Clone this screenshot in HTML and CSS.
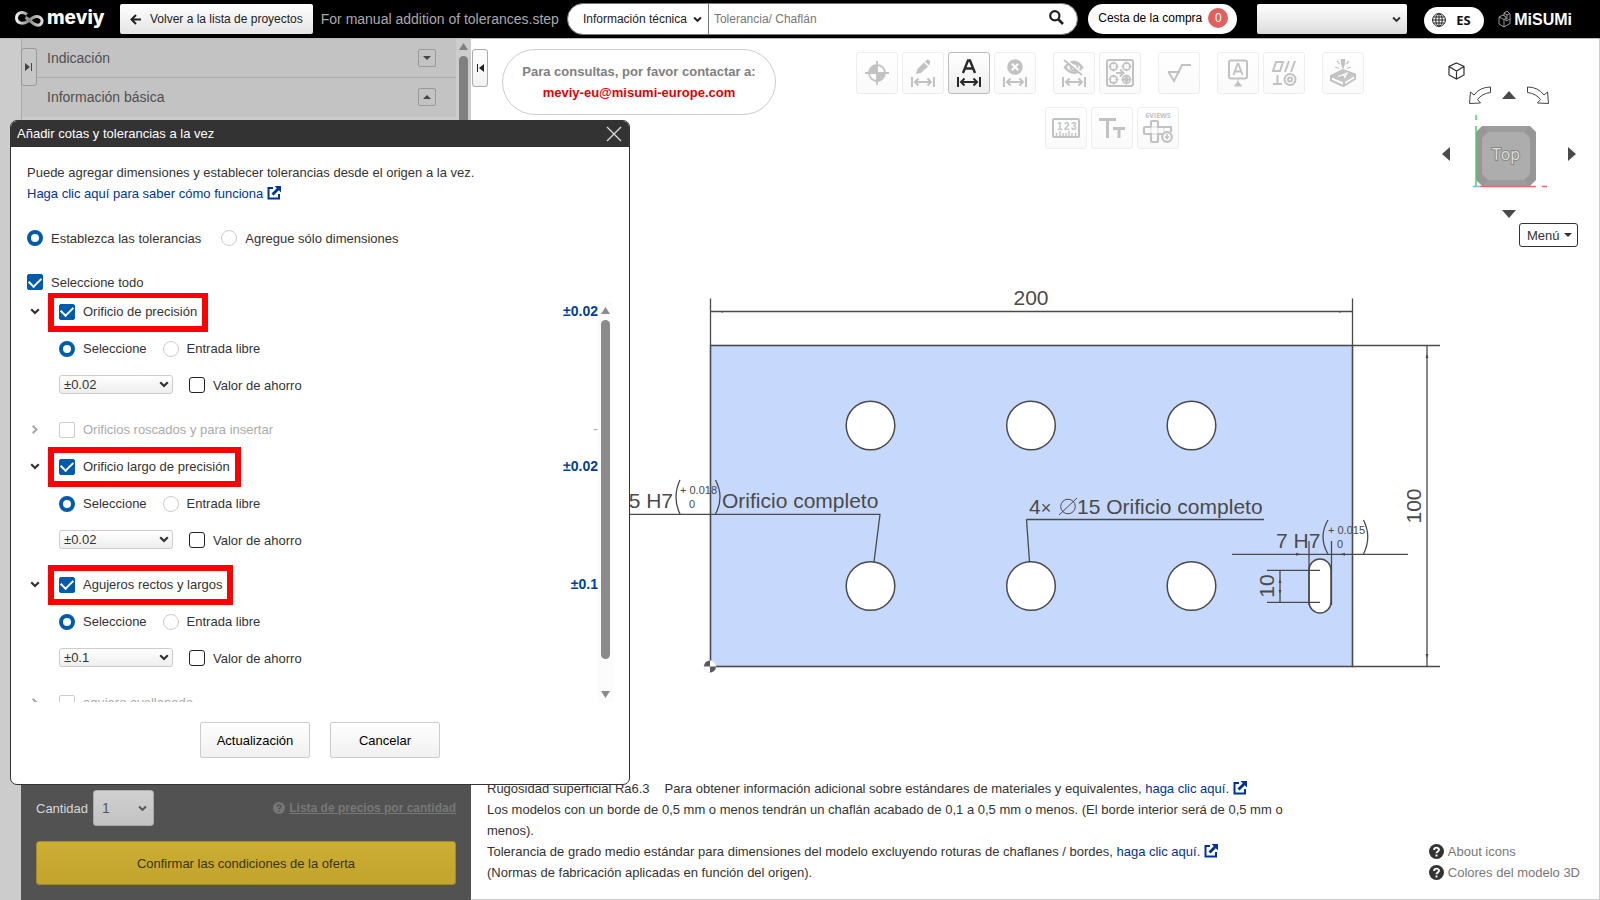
FILE: index.html
```html
<!DOCTYPE html>
<html lang="es">
<head>
<meta charset="utf-8">
<meta name="viewport" content="width=device-width, initial-scale=1">
<title>meviy</title>
<link rel="stylesheet" href="styles.css">
</head>
<body>
<svg class="defs" aria-hidden="true">
  <symbol id="chev" viewBox="0 0 10 7"><path d="M1.200 1.200l3.800 3.800 3.800-3.800" fill="none" stroke="currentColor" stroke-width="2.200"/></symbol>
  <symbol id="ext" viewBox="0 0 14 14"><path d="M6 2H1.500v10.500H12V8" fill="none" stroke="currentColor" stroke-width="2"/><path d="M7.500 0H14v6.500l-2.200-2.200L6.500 9.600 4.500 7.500 9.800 2.300z" fill="currentColor"/></symbol>
  <symbol id="help" viewBox="0 0 14 14"><circle cx="7" cy="7" r="7" fill="currentColor"/><path d="M4.800 5.500C4.800 2.700 9.300 2.800 9.300 5.300 9.300 7 7 6.900 7 8.600M7 9.800v1.800" fill="none" stroke="var(--mark)" stroke-width="1.800"/></symbol>
  <symbol id="dim" viewBox="0 0 24 10"><path d="M1 0v10M23 0v10M4 5h16M7.500 1.500L4 5l3.500 3.500M16.500 1.500L20 5l-3.500 3.500" fill="none" stroke="currentColor" stroke-width="2"/></symbol>
</svg>

<header class="topbar">
  <div class="brand">
    <svg width="29" height="17" viewBox="0 0 29 17" aria-hidden="true"><defs><linearGradient id="silver"><stop offset="0" stop-color="#eee"/><stop offset="0.500" stop-color="#888"/><stop offset="1" stop-color="#ddd"/></linearGradient></defs><path d="M12 3.500C7-0.500 1.500 2 1.500 7s6 7 11 3.500C16 7.500 19 5 22.500 5.500S28 9 26.500 12s-5 2.500-8 .5-5-5-8-6" fill="none" stroke="url(#silver)" stroke-width="3"/></svg>
    <span class="brand-name">meviy</span>
  </div>
  <button class="back" type="button"><svg width="11" height="11" viewBox="0 0 11 11" aria-hidden="true"><path d="M6 1L1.500 5.500 6 10M1.500 5.500H11" fill="none" stroke="#222" stroke-width="2"/></svg>Volver a la lista de proyectos</button>
  <span class="filename">For manual addition of tolerances.step</span>
  <form class="search">
    <span class="pick pick-search"><select aria-label="Categoría"><option>Información técnica</option></select><svg class="chev"><use href="#chev"/></svg></span>
    <input type="text" aria-label="Buscar" placeholder="Tolerancia/ Chaflán">
    <button class="search-go" type="button" aria-label="Buscar"><svg width="15" height="15" viewBox="0 0 15 15"><circle cx="5.800" cy="5.800" r="4.600" fill="none" stroke="#222" stroke-width="2.200"/><path d="M9 9l5 5" stroke="#222" stroke-width="2.600"/></svg></button>
  </form>
  <button class="cart" type="button">Cesta de la compra <span class="badge">0</span></button>
  <span class="pick pick-user"><select aria-label="Usuario"><option></option></select><svg class="chev"><use href="#chev"/></svg></span>
  <button class="lang" type="button"><svg width="14" height="14" viewBox="0 0 14 14" fill="none" stroke="#222" aria-hidden="true"><circle cx="7" cy="7" r="6.400"/><ellipse cx="7" cy="7" rx="3.200" ry="6.400"/><path d="M7 .5v13M.5 7h13M1.500 4h11M1.500 10h11"/></svg>ES</button>
  <div class="misumi">
    <svg width="14" height="18" viewBox="0 0 14 18" fill="none" stroke="#aaa" stroke-width="0.900" aria-hidden="true"><path d="M1 7l4-2 3 2v4l4-2V4L9 1 6 3v3M1 7v7l5 3V9.500zM6 9.500l2-1M6 17l6-3.500V9M6 3l3 2v4M9 5l3-1.500"/></svg>
    <span>MiSUMi</span>
  </div>
</header>

<main class="work">
  <aside class="side">
    <button class="tab tab-left" type="button" aria-label="Expandir"><svg width="8" height="8" viewBox="0 0 8 8"><path d="M0 0l5 4-5 4zM6 0h1v8H6z" fill="#444"/></svg></button>
    <div class="side-scroll">
      <div class="side-list">
        <div class="side-row"><span>Indicación</span><button class="fold" type="button" aria-label="Abrir Indicación"><svg width="8" height="4" viewBox="0 0 8 4"><path d="M0 0h8L4 4z" fill="#444"/></svg></button></div>
        <div class="side-row"><span>Información básica</span><button class="fold" type="button" aria-label="Cerrar Información básica"><svg width="8" height="4" viewBox="0 0 8 4"><path d="M0 4h8L4 0z" fill="#444"/></svg></button></div>
      </div>
      <div class="side-bar" aria-hidden="true"><svg width="9" height="7" viewBox="0 0 9 7"><path d="M0 7h9L4.500 0z" fill="#808080"/></svg><i></i></div>
    </div>
    <div class="order">
      <div class="order-row">
        <label for="qty">Cantidad</label>
        <span class="pick pick-qty"><select id="qty"><option>1</option></select><svg class="chev"><use href="#chev"/></svg></span>
        <a class="prices" href="#"><svg width="12" height="12"><use href="#help"/></svg><span>Lista de precios por cantidad</span></a>
      </div>
      <button class="confirm" type="button">Confirmar las condiciones de la oferta</button>
    </div>
  </aside>

  <section class="viewer">
    <svg class="drawing" viewBox="471 39 1128 860" preserveAspectRatio="xMidYMid meet" role="img" aria-label="Plano de la pieza">
      <rect x="710" y="345" width="642" height="321" fill="#c6d9fd"/>
      <g fill="#fff" stroke="#4a4a4a" stroke-width="1.500">
        <circle cx="870.500" cy="425.500" r="24.300"/><circle cx="1031" cy="425.500" r="24.300"/><circle cx="1191.500" cy="425.500" r="24.300"/>
        <circle cx="870.500" cy="586" r="24.300"/><circle cx="1031" cy="586" r="24.300"/><circle cx="1191.500" cy="586" r="24.300"/>
        <rect x="1309" y="559" width="22" height="54" rx="11"/>
      </g>
      <g fill="none" stroke="#4a4a4a" stroke-width="1.300">
        <rect x="710.500" y="345.500" width="642" height="321" stroke-width="1.600"/>
        <path d="M710.500 298.500V345M1352.500 298.500V345M710.500 311.500H1352"/>
        <path d="M1352 345.500H1440M1352 666.500H1440M1427 345V666" />
        <path d="M1026.500 519.500H1264M1026.500 519.500L1029.500 562"/>
        <path d="M600 514.300H880L874 562"/>
        <path d="M1232 554.300H1408M1309 541V605M1331.500 541V605M1267 570.300H1320M1267 602.300H1320M1280 570V602"/>
        <path d="M680 480Q672 497 680 514M715.500 480Q724.500 497 715.500 514M1328 520Q1318 537 1328 554M1363.500 520Q1372 537 1363.500 554"/>
      </g>
      <path d="M719 311.500h4v1.300zM1343 311.500h-4v1.300zM1425.500 358l1.500-4 1.500 4zM1425.500 654l1.500 4 1.500-4zM1301 554.300l-5-1.500v3zM1340 554.300l5-1.500v3zM1278.500 583l1.500-4 1.500 4zM1278.500 590l1.500 4 1.500-4z" fill="#4a4a4a"/>
      <circle cx="710" cy="666.500" r="6" fill="#fff" stroke="#ccc" stroke-width="0.500"/><path d="M710 666.500V660.500A6 6 0 0 0 704 666.500zM710 666.500V672.500A6 6 0 0 0 716 666.500z" fill="#5a5a5a"/>
      <g class="dims">
        <text x="1031" y="305" text-anchor="middle">200</text>
        <text x="1421" y="506" text-anchor="middle" transform="rotate(-90 1421 506)">100</text>
        <text x="1274" y="586" text-anchor="middle" transform="rotate(-90 1274 586)">10</text>
        <text x="673" y="508" text-anchor="end">15 H7</text>
        <text x="722" y="508">Orificio completo</text>
        <text x="1029" y="514">4<tspan class="times">×</tspan></text>
        <text x="1077" y="514">15 Orificio completo</text>
        <text x="1276" y="548">7 H7</text>
        <g class="tol"><text x="680" y="494">+ 0.018</text><text x="689" y="508">0</text><text x="1328" y="534">+ 0.015</text><text x="1337" y="548">0</text></g>
      </g>
      <path d="M1059 515L1077 498" stroke="#4a4a4a" fill="none"/><circle cx="1068" cy="506.500" r="7.300" stroke="#4a4a4a" fill="none"/>
    </svg>

    <div class="viewer-top">
      <button class="tab tab-right" type="button" aria-label="Contraer"><svg width="8" height="8" viewBox="0 0 8 8"><path d="M8 0L3 4l5 4zM1 0h1v8H1z" fill="#222"/></svg></button>
      <p class="contact">Para consultas, por favor contactar a:<br><a href="mailto:meviy-eu@misumi-europe.com">meviy-eu@misumi-europe.com</a></p>

      <div class="tools">
        <div class="tools-row">
          <div class="group">
            <button class="tool" type="button" aria-label="Origen"><svg width="24" height="24" viewBox="0 0 24 24"><circle cx="12" cy="12" r="8" fill="none" stroke="currentColor" stroke-width="1.800"/><path d="M12 12V4a8 8 0 0 0-8 8zM12 12v8a8 8 0 0 0 8-8z" fill="currentColor"/><path d="M12 0v24M0 12h24" stroke="currentColor" stroke-width="1.800"/></svg></button>
            <button class="tool" type="button" aria-label="Editar cota"><svg width="24" height="28" viewBox="0 0 24 28"><path d="M5 15l1.500-5L13 3.500l4 4L10 14zM14 2.500l1.500-1.500q1.500-1 3 .5t.5 3L17.800 6.200z" fill="currentColor"/><use href="#dim" y="18" width="24" height="10"/></svg></button>
            <button class="tool tool-on" type="button" aria-label="Cotas automáticas"><svg width="24" height="28" viewBox="0 0 24 28"><path d="M6 14L11 1.500h2L18 14M8 9.500h8" fill="none" stroke="currentColor" stroke-width="2.400"/><use href="#dim" y="18" width="24" height="10"/></svg></button>
            <button class="tool" type="button" aria-label="Borrar cota"><svg width="24" height="28" viewBox="0 0 24 28"><circle cx="12" cy="8" r="7.800" fill="currentColor"/><path d="M8.800 4.800l6.400 6.400M15.200 4.800l-6.400 6.400" stroke="#fff" stroke-width="2"/><use href="#dim" y="18" width="24" height="10"/></svg></button>
          </div>
          <div class="group">
            <button class="tool" type="button" aria-label="Ocultar cotas"><svg width="24" height="28" viewBox="0 0 24 28"><path d="M3 8.500Q12-3 20 8.500 12 19 3 8.500z" fill="none" stroke="currentColor" stroke-width="2.500"/><circle cx="12" cy="8" r="3.500" fill="none" stroke="currentColor" stroke-width="2"/><path d="M3 0l18 15" stroke="#fff" stroke-width="2"/><path d="M2 1l18 15" stroke="currentColor" stroke-width="1.800"/><use href="#dim" y="18" width="24" height="10"/></svg></button>
            <button class="tool" type="button" aria-label="Agrupar orificios"><svg width="28" height="28" viewBox="0 0 28 28" fill="none" stroke="currentColor"><rect x="1" y="1" width="26" height="26" rx="2" stroke-width="2"/><g stroke-width="1.800"><circle cx="7.500" cy="7.500" r="3.600"/><circle cx="20.500" cy="7.500" r="3.600"/><circle cx="7.500" cy="20.500" r="3.600"/><circle cx="20.500" cy="20.500" r="3.800"/></g><path d="M7.500 2.500v3M7.500 9.500v3M2.500 7.500h3M9.500 7.500h3M20.500 2.500v3M20.500 9.500v3M15.500 7.500h3M22.500 7.500h3M7.500 15.500v3M7.500 22.500v3M2.500 20.500h3M9.500 20.500h3M20.500 15.500v10M15.500 20.500h10"/><circle cx="20.500" cy="20.500" r="2" fill="currentColor"/><path d="M10 14h7M14 10.500l3.500 3.500-3.500 3.500" stroke-width="2"/></svg></button>
          </div>
          <div class="group">
            <button class="tool" type="button" aria-label="Rugosidad"><svg width="26" height="20" viewBox="0 0 26 20"><path d="M2 9h12M2.500 9l5.500 9L16 2h9" fill="none" stroke="currentColor" stroke-width="2"/></svg></button>
          </div>
          <div class="group">
            <button class="tool" type="button" aria-label="Referencia"><svg width="20" height="28" viewBox="0 0 20 28"><rect x="1" y="1.500" width="18" height="18" rx="2" fill="none" stroke="currentColor" stroke-width="2"/><path d="M5.500 16l4-11h1l4 11M7 12.500h6" fill="none" stroke="currentColor" stroke-width="1.800"/><path d="M10 19v4M6.500 27L10 22.500 13.500 27z" stroke="currentColor" fill="currentColor"/></svg></button>
            <button class="tool" type="button" aria-label="Tolerancia geométrica"><svg width="26" height="26" viewBox="0 0 26 26" fill="none" stroke="currentColor" stroke-width="2"><path d="M2 11L5 2h7L9 11zM14 12l4-11M20 12l4-11M2 24h9M6.500 15v9"/><circle cx="19" cy="19.500" r="5.500"/><circle cx="19" cy="19.500" r="2"/></svg></button>
          </div>
          <div class="group">
            <button class="tool" type="button" aria-label="Grabado"><svg width="28" height="28" viewBox="0 0 28 28"><path d="M12.500 0h3v5L14 9l-1.500-4zM8 2l2.500 3M20 2l-2.500 3M6 8l4 1.500M22 8l-4 1.500" fill="currentColor" stroke="currentColor" stroke-width="1.200"/><path d="M2 17l12-6 12 4.500-11 7zM2 17v4.500l12.500 5.500L26 20v-4.500M15 22.500V27" fill="none" stroke="currentColor" stroke-width="2" stroke-linejoin="round"/><path d="M4 17l10-5 10 3.500-9 6z" fill="currentColor"/><path d="M9 17.500l9-3.500-2.500 5M14 15.500l2 2" stroke="#fff" fill="none" stroke-width="1.200"/></svg></button>
          </div>
        </div>
        <div class="tools-row group">
          <button class="tool" type="button" aria-label="Unidades"><svg width="28" height="20" viewBox="0 0 28 20"><rect x="1" y="1" width="26" height="18" rx="1.500" fill="none" stroke="currentColor" stroke-width="2"/><path d="M4.500 18v-3M8 18v-5M11 18v-3M14 18v-3M17 18v-5M20 18v-3M23.500 18v-3" stroke="currentColor" stroke-width="1.400"/><g class="ico-num"><text x="5" y="12">1</text><text x="12" y="12">2</text><text x="19" y="12">3</text></g></svg></button>
          <button class="tool" type="button" aria-label="Tamaño de texto"><svg width="26" height="22" viewBox="0 0 26 22"><path d="M0 2.500h17M8.500 2v19M14 11.500h12M20 11v10" fill="none" stroke="currentColor" stroke-width="3"/></svg></button>
          <button class="tool" type="button" aria-label="Seis vistas"><svg width="32" height="34" viewBox="0 0 32 34"><text x="16" y="7" text-anchor="middle" class="ico-views">6VIEWS</text><path d="M9 16v-5q0-1 1-1h5q1 0 1 1v5h13v5M9 16H3q-1 0-1 1v5q0 1 1 1h6v7q0 1 1 1h5q1 0 1-1v-7h4" fill="none" stroke="currentColor" stroke-width="2.200"/><path d="M9 16h7v7H9zM22 16v5" fill="none" stroke="currentColor" stroke-width="0.600"/><circle cx="25" cy="26" r="4.800" fill="#fff" stroke="currentColor" stroke-width="2.200"/><path d="M25 23v4M23 25.500l2 2 2-2" fill="none" stroke="currentColor" stroke-width="1.600"/></svg></button>
        </div>
      </div>

      <nav class="orient" aria-label="Orientación">
        <button class="bare home" type="button" aria-label="Isométrica"><svg width="17" height="18" viewBox="0 0 17 18" fill="none" stroke="#333" stroke-width="1.200"><path d="M8.500 1l7.500 3.500v8.500L8.500 17 1 13V4.500zM1 4.500L8.500 9 16 4.500M8.500 9v8"/></svg></button>
        <div class="turns">
          <button class="bare" type="button" aria-label="Girar a la izquierda"><svg width="22" height="18" viewBox="0 0 22 18"><path d="M21.500 1v5.500Q13 7.500 8.500 13.500L11.500 17 0.500 17.500 1.500 6 5 9Q11 1 21.500 1z" fill="#fff" stroke="#444"/></svg></button>
          <button class="bare" type="button" aria-label="Arriba"><svg width="14" height="8" viewBox="0 0 14 8"><path d="M0 8h14L7 0z" fill="#4a4a4a"/></svg></button>
          <button class="bare" type="button" aria-label="Girar a la derecha"><svg width="22" height="18" viewBox="0 0 22 18"><path d="M0.500 1v5.500Q9 7.500 13.500 13.500L10.500 17l11 .5L20.500 6 17 9Q11 1 .5 1z" fill="#fff" stroke="#444"/></svg></button>
        </div>
        <div class="faces">
          <button class="bare" type="button" aria-label="Izquierda"><svg width="8" height="14" viewBox="0 0 8 14"><path d="M8 0v14L0 7z" fill="#4a4a4a"/></svg></button>
          <svg width="84" height="76" viewBox="0 0 84 76" role="img" aria-label="Top"><path d="M9 18l6-6h48l6 6v48l-6 6H15l-6-6z" fill="#979797"/><path d="M15 12h48l-6 6H21zM15 72h48l-6-6H21z" fill="#9d9d9d"/><path d="M15 24l6-6h36l6 6v36l-6 6H21l-6-6z" fill="#adadad"/><path d="M9 1v5M9 12v60" stroke="#4ccf6c" stroke-width="1.500"/><path d="M13 72.500H69M75 72.500h5" stroke="#f26464" stroke-width="1.500"/><path d="M6 72.500h7" stroke="#7fb6ea" stroke-width="1.500"/><text x="39" y="46" text-anchor="middle" class="face-name">Top</text></svg>
          <button class="bare" type="button" aria-label="Derecha"><svg width="8" height="14" viewBox="0 0 8 14"><path d="M0 0v14l8-7z" fill="#4a4a4a"/></svg></button>
        </div>
        <button class="bare down" type="button" aria-label="Abajo"><svg width="14" height="8" viewBox="0 0 14 8"><path d="M0 0h14L7 8z" fill="#4a4a4a"/></svg></button>
        <button class="menu" type="button">Menú<svg width="8" height="4" viewBox="0 0 8 4" aria-hidden="true"><path d="M0 0h8L4 4z" fill="#333"/></svg></button>
      </nav>
    </div>

    <div class="viewer-foot">
      <div class="notes">
        <p><span class="rough">Rugosidad superficial Ra6.3</span>Para obtener información adicional sobre estándares de materiales y equivalentes, <a href="#">haga clic aquí. <svg class="ext"><use href="#ext"/></svg></a></p>
        <p>Los modelos con un borde de 0,5 mm o menos tendrán un chaflán acabado de 0,1 a 0,5 mm o menos. (El borde interior será de 0,5 mm o menos).</p>
        <p>Tolerancia de grado medio estándar para dimensiones del modelo excluyendo roturas de chaflanes / bordes, <a href="#">haga clic aquí. <svg class="ext"><use href="#ext"/></svg></a><br>(Normas de fabricación aplicadas en función del origen).</p>
      </div>
      <div class="helps">
        <a href="#"><svg width="15" height="15"><use href="#help"/></svg>About icons</a>
        <a href="#"><svg width="15" height="15"><use href="#help"/></svg>Colores del modelo 3D</a>
      </div>
    </div>
  </section>
</main>

<div class="modal" role="dialog" aria-labelledby="modal-title">
  <div class="modal-head">
    <h1 id="modal-title">Añadir cotas y tolerancias a la vez</h1>
    <button class="bare" type="button" aria-label="Cerrar"><svg width="16" height="16" viewBox="0 0 16 16"><path d="M1 1l14 14M15 1L1 15" stroke="#ddd" stroke-width="1.300"/></svg></button>
  </div>
  <form class="modal-body">
    <p class="intro">Puede agregar dimensiones y establecer tolerancias desde el origen a la vez.<br><a href="#">Haga clic aquí para saber cómo funciona <svg class="ext"><use href="#ext"/></svg></a></p>
    <div class="modes">
      <label class="opt"><input type="radio" name="mode" checked>Establezca las tolerancias</label>
      <label class="opt"><input type="radio" name="mode">Agregue sólo dimensiones</label>
    </div>
    <label class="opt all"><input type="checkbox" checked>Seleccione todo</label>
    <div class="list-wrap">
      <div class="list">
        <div class="feature">
          <svg class="chev"><use href="#chev"/></svg>
          <label class="opt marked"><input type="checkbox" checked>Orificio de precisión</label>
          <output>±0.02</output>
        </div>
        <div class="choice"><label class="opt"><input type="radio" name="m1" checked>Seleccione</label><label class="opt"><input type="radio" name="m1">Entrada libre</label></div>
        <div class="value"><span class="pick"><select aria-label="Tolerancia"><option>±0.02</option></select><svg class="chev"><use href="#chev"/></svg></span><label class="opt"><input class="dark" type="checkbox">Valor de ahorro</label></div>

        <div class="feature off">
          <svg class="chev side-chev"><use href="#chev"/></svg>
          <label class="opt"><input type="checkbox" disabled>Orificios roscados y para insertar</label>
          <output>-</output>
        </div>

        <div class="feature">
          <svg class="chev"><use href="#chev"/></svg>
          <label class="opt marked"><input type="checkbox" checked>Orificio largo de precisión</label>
          <output>±0.02</output>
        </div>
        <div class="choice"><label class="opt"><input type="radio" name="m2" checked>Seleccione</label><label class="opt"><input type="radio" name="m2">Entrada libre</label></div>
        <div class="value"><span class="pick"><select aria-label="Tolerancia"><option>±0.02</option></select><svg class="chev"><use href="#chev"/></svg></span><label class="opt"><input class="dark" type="checkbox">Valor de ahorro</label></div>

        <div class="feature">
          <svg class="chev"><use href="#chev"/></svg>
          <label class="opt marked"><input type="checkbox" checked>Agujeros rectos y largos</label>
          <output>±0.1</output>
        </div>
        <div class="choice"><label class="opt"><input type="radio" name="m3" checked>Seleccione</label><label class="opt"><input type="radio" name="m3">Entrada libre</label></div>
        <div class="value"><span class="pick"><select aria-label="Tolerancia"><option>±0.1</option></select><svg class="chev"><use href="#chev"/></svg></span><label class="opt"><input class="dark" type="checkbox">Valor de ahorro</label></div>

        <div class="feature off">
          <svg class="chev side-chev"><use href="#chev"/></svg>
          <label class="opt"><input type="checkbox" disabled>agujero avellanado</label>
        </div>
      </div>
      <div class="list-bar" aria-hidden="true"><svg width="9" height="7" viewBox="0 0 9 7"><path d="M0 7h9L4.500 0z" fill="#8b8b8b"/></svg><i></i><svg width="9" height="7" viewBox="0 0 9 7"><path d="M0 0h9L4.500 7z" fill="#8b8b8b"/></svg></div>
    </div>
    <div class="actions">
      <button type="button">Actualización</button>
      <button type="button">Cancelar</button>
    </div>
  </form>
</div>
</body>
</html>
```
FILE: styles.css
```css
* { box-sizing: border-box; }
body { margin: 0; height: 100vh; display: flex; flex-direction: column; overflow: hidden; background: #fff; color: #333; font: 13px/21px "Liberation Sans", Arial, sans-serif; }
button, input, select { font: inherit; color: inherit; margin: 0; }
button { cursor: pointer; }
p, h1 { margin: 0; }
svg { display: block; flex: none; }
a { color: #003399; text-decoration: none; }
.defs { position: absolute; width: 0; height: 0; }
.bare { border: 0; padding: 0; background: none; }
.ext { display: inline-block; width: 14px; height: 14px; vertical-align: -2px; }
.chev { width: 10px; height: 7px; }

.pick { display: grid; grid-template-rows: 100%; align-items: center; border: 1px solid #ccc; border-radius: 3px; background: linear-gradient(#fff, #eee); }
.pick select { grid-area: 1 / 1; width: 100%; height: 100%; appearance: none; border: 0; padding: 0 4px; background: none; line-height: 17px; }
.pick .chev { grid-area: 1 / 1; justify-self: end; margin-right: 3px; pointer-events: none; }

/* Top bar */
.topbar { flex: none; display: flex; align-items: center; height: 39px; padding: 0 28px 0 15px; background: #000; border-bottom: 1px solid #bbb; font-size: 12px; }
.brand { display: flex; align-items: center; gap: 3px; width: 105px; color: #fff; }
.brand-name { font: 800 19px/24px Inter, "Open Sans", sans-serif; padding-bottom: 2px; }
.back { display: flex; align-items: center; gap: 9px; height: 30px; padding: 0 10px; border: 0; border-radius: 2px; background: linear-gradient(#fff, #e4e4e4); color: #222; white-space: nowrap; }
.filename { margin: 0 8px; font-size: 14px; color: #aaa; white-space: nowrap; }
.search { flex: 1; display: flex; height: 32px; border: 1px solid #777; border-radius: 16px; background: #fff; overflow: hidden; }
.pick-search { width: 141px; border: 0; border-right: 1px solid #777; border-radius: 0; background: none; color: #222; }
.pick-search select { padding-left: 15px; }
.pick-search .chev, .pick-qty .chev, .pick-user .chev { width: 9px; margin-right: 6px; }
.search input { flex: 1; min-width: 0; border: 0; padding: 0 5px; background: none; outline: 0; }
.search input::placeholder { color: #777; }
.search-go { display: flex; align-items: center; width: 28px; padding: 0 0 4px; border: 0; background: none; }
.cart { display: flex; align-items: center; justify-content: space-between; width: 149px; height: 30px; margin-left: 10px; padding: 0 9px 2px 10px; border: 0; border-radius: 15px; background: #fff; color: #000; white-space: nowrap; }
.badge { width: 20px; height: 20px; border-radius: 10px; background: #e06060; color: #fff; line-height: 20px; text-align: center; }
.pick-user { width: 150px; height: 30px; margin: 0 17px 0 20px; border: 0; border-radius: 2px; background: linear-gradient(#fff, #dcdcdc); }
.lang { display: flex; align-items: center; gap: 10px; width: 60px; height: 27px; margin-top: 2px; padding: 0 8px; border: 0; border-radius: 14px; background: #fff; color: #111; font: 700 13px/20px "Open Sans", sans-serif; }
.misumi { display: flex; align-items: center; gap: 2px; margin-left: 14px; color: #fff; font-size: 16px; font-weight: 700; }

.work { flex: 1; min-height: 0; display: flex; }

/* Side panel */
.side { flex: none; width: 471px; padding-left: 21px; display: flex; flex-direction: column; background: #ccc; position: relative; }
.tab { display: flex; align-items: center; justify-content: center; width: 16px; height: 38px; padding: 0; border: 1px solid #aaa; border-radius: 3px; background: linear-gradient(#fff, #f2f2f2); }
.tab-left { position: absolute; left: 21px; top: 9px; background: #c6c6c6; border-color: #999; }
.side-scroll { flex: 1; display: flex; border-left: 1px solid #aaa; }
.side-list { flex: 1; }
.side-row { display: flex; align-items: center; justify-content: space-between; height: 39px; padding: 0 20px 0 25px; border-bottom: 1px solid #aaa; background: #c3c3c3; color: #505050; font-size: 14px; }
.side-row:last-child { border-bottom-color: #c3c3c3; }
.fold { display: grid; place-items: center; width: 18px; height: 18px; padding: 0; border: 1px solid #999; border-radius: 2px; background: none; }
.side-bar { width: 15px; display: flex; flex-direction: column; align-items: center; gap: 6px; padding: 4px 0; }
.side-bar i { flex: 1; width: 9px; border-radius: 5px; background: #808080; }
.order { padding: 15px; background: #525252; }
.order-row { display: flex; align-items: center; margin-bottom: 15px; color: #d8d8d8; }
.pick-qty { width: 61px; height: 36px; margin-left: 5px; border-color: #aaa; background: linear-gradient(#d0d0d0, #c2c2c2); color: #555; }
.pick-qty select { padding-left: 8px; font-size: 14px; }
.prices { --mark: #525252; display: flex; align-items: center; gap: 4px; margin-left: auto; color: #777; font-size: 12px; font-weight: 700; }
.prices span { text-decoration: underline; }
.confirm { width: 100%; height: 44px; border: 1px solid #a08a2a; border-radius: 3px; background: linear-gradient(#ccae34, #c2a42e); color: #3d3410; }

/* Viewer */
.viewer { flex: 1; min-width: 0; position: relative; display: flex; flex-direction: column; justify-content: space-between; border: solid #ccc; border-width: 0 1px 1px 0; }
.drawing { position: absolute; inset: 0; width: 100%; height: 100%; }
.dims { font-size: 21px; fill: #4a4a4a; }
.times { font-size: 18px; }
.tol { font-size: 11px; }
.viewer-top, .viewer-foot { position: relative; display: flex; }
.tab-right { margin: 10px 0 0 1px; }
.contact { flex: none; margin: 10px 0 0 14px; width: 274px; height: 66px; padding: 11px 0; border: 1px solid #ccc; border-radius: 33px; background: #fff; text-align: center; color: #808080; font-weight: 700; }
.contact a { color: #e00000; }
.tools { flex: 1; display: flex; flex-direction: column; align-items: center; gap: 13px; padding: 13px 0 0 2px; }
.tools-row { display: flex; gap: 17px; }
.group, .tools-row.group { display: flex; gap: 4px; }
.tools-row.group { padding-left: 4px; }
.tool { display: grid; place-items: center; width: 42px; height: 42px; padding: 0; border: 1px solid #eee; border-radius: 3px; background: linear-gradient(#fff, #fafafa); color: #c2c2c2; }
.tool-on { border-color: #bbb; background: linear-gradient(#fff, #eee); color: #2a2a2a; }
.ico-num { font-size: 10px; font-weight: 700; fill: currentColor; }
.ico-views { font: 700 7px "Open Sans", sans-serif; fill: currentColor; }
.orient { flex: none; width: 134px; margin-right: 23px; padding-top: 23px; display: flex; flex-direction: column; align-items: center; }
.home { align-self: flex-start; margin: 0 0 6px 6px; }
.turns { display: flex; align-items: center; justify-content: space-between; width: 80px; margin-bottom: 10px; }
.faces { display: flex; align-items: center; justify-content: space-between; width: 100%; margin-bottom: 20px; }
.faces .bare { margin-top: 4px; }
.face-name { font: 16px "Open Sans", sans-serif; fill: #ddd; stroke: #888; stroke-width: 2px; paint-order: stroke; }
.menu { align-self: flex-end; display: flex; align-items: center; justify-content: space-between; width: 59px; height: 24px; margin: 5px -2px 0 0; padding: 0 5px 0 7px; border: 1px solid #333; border-radius: 3px; background: #fff; }
.viewer-foot { justify-content: space-between; align-items: flex-end; padding: 0 19px 16px 16px; }
.notes { width: 810px; }
.rough { margin-right: 15px; }
.helps a { --mark: #fff; display: flex; align-items: center; gap: 4px; color: #777; }
.helps svg { color: #333; }

/* Dialog */
.modal { position: absolute; left: 10px; top: 120px; width: 620px; border: 1px solid #333; border-radius: 7px; background: #fff; overflow: hidden; }
.modal-head { display: flex; align-items: center; justify-content: space-between; height: 26px; padding: 0 7px 0 6px; background: #333; color: #fff; }
.modal-head h1 { padding-bottom: 2px; font-size: 13px; font-weight: 400; }
.modal-body { padding: 15px 16px 26px; }
.modes { display: flex; gap: 20px; margin-top: 23px; }
.opt { display: flex; align-items: center; gap: 8px; height: 22px; white-space: nowrap; }
.all { margin-top: 22px; }
.opt input { flex: none; appearance: none; width: 16px; height: 16px; border: 1px solid #ccc; background: #fff; }
.opt input[type="radio"] { border-radius: 50%; }
.opt input[type="radio"]:checked { border: 4px solid #005bac; }
.opt input[type="checkbox"] { display: grid; place-items: center; border-radius: 2px; }
.opt input[type="checkbox"]:checked { border-color: #005bac; background: #005bac; }
.opt input[type="checkbox"]:checked::before { content: ""; width: 10px; height: 6px; margin-bottom: 3px; border: solid #fff; border-width: 0 0 2px 2px; transform: rotate(-45deg); }
.opt input.dark { border-color: #222; border-radius: 3px; }
.list-wrap { display: flex; height: 409px; }
.list { flex: 1; overflow: hidden; }
.feature { display: flex; align-items: center; height: 37px; padding-left: 3px; }
.feature .opt { margin-left: 19px; }
.feature output { margin-left: auto; color: #003f94; font-size: 14px; font-weight: 700; }
.feature.off, .feature.off output { color: #aaa; font-weight: 400; }
.side-chev { transform: rotate(-90deg); }
.marked { position: relative; }
.marked::after { content: ""; position: absolute; inset: -9px -11px; border: 6px solid #f00; }
.choice { display: flex; align-items: center; gap: 16px; height: 37px; padding-left: 32px; }
.value { display: flex; align-items: flex-start; gap: 16px; height: 44px; padding: 8px 0 0 32px; }
.value .pick { width: 114px; height: 19px; }
.value .opt { height: 20px; }
.list-bar { width: 15px; margin-top: 9px; display: flex; flex-direction: column; align-items: center; padding: 5px 0 4px; background: #fcfcfc; }
.list-bar i { width: 9px; height: 339px; margin: 6px 0 auto; border-radius: 5px; background: #8b8b8b; }
.actions { display: flex; justify-content: center; gap: 20px; margin-top: 20px; }
.actions button { width: 110px; height: 36px; border: 1px solid #ccc; border-radius: 2px; background: linear-gradient(#fff, #f0f0f0); color: #000; }
```
